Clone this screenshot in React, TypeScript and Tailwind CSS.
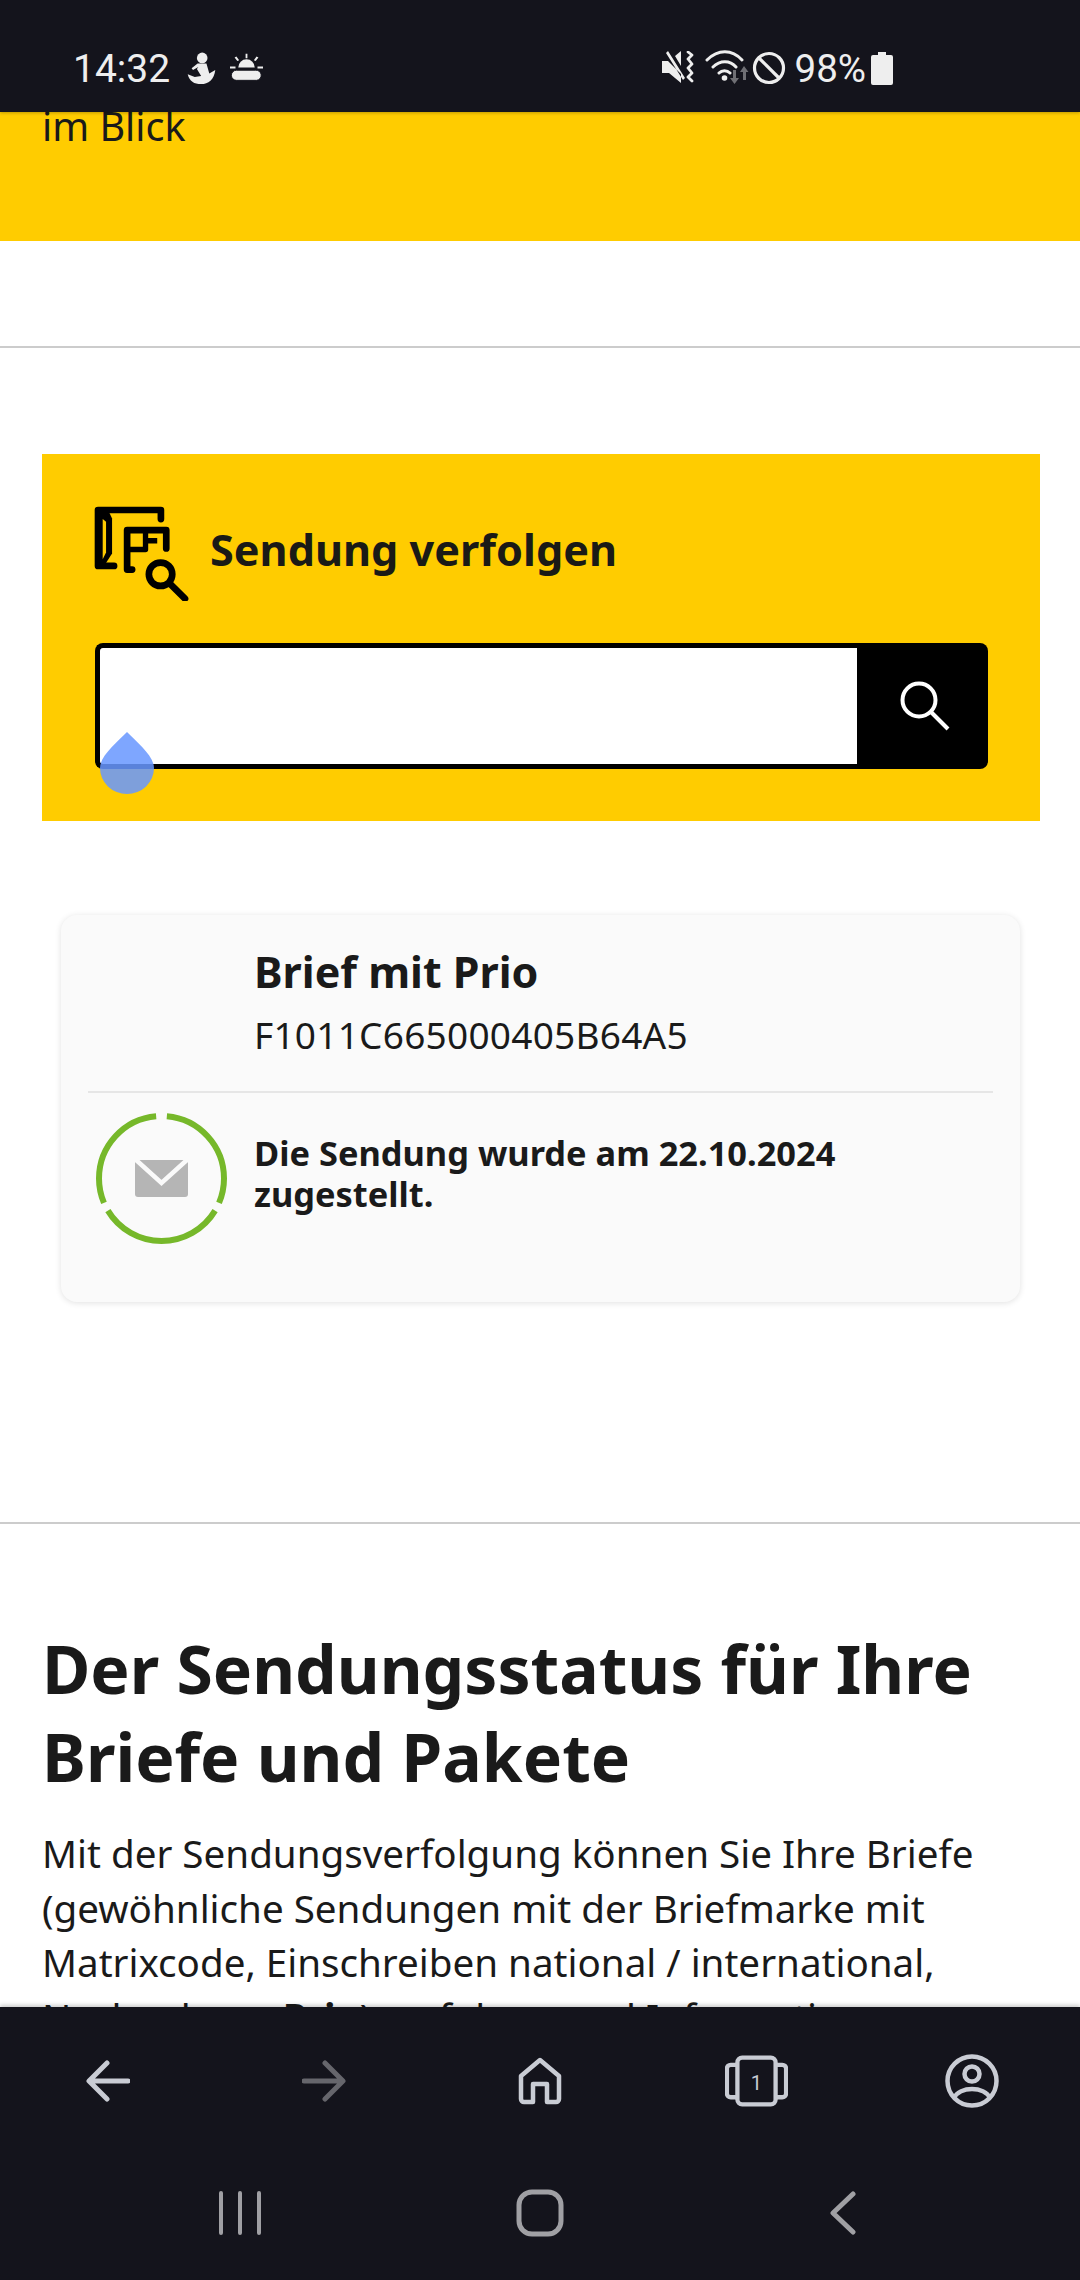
function StatusBar() {
  return (
    <div className="relative z-10 flex h-[112px] shrink-0 items-start bg-[#14141c] pl-[73px] pt-[46px] font-['Roboto',sans-serif] text-[39px] leading-[46px] text-[#eeeeee] shadow-[0_1px_3px_rgba(0,0,0,0.25)]">
      <span className="w-[114px]">14:32</span>
      <svg width="29" height="34" viewBox="385 65 82 95" className="mt-[5px]" fill="#eeeeee">
        <circle cx="428" cy="84" r="15" />
        <path d="M415 100h25l8 28 17-10c-3 27-20 40-40 40-20 0-33-8-38-28l20 8 18-3-12-20 4-5-15 8-4-5z" />
      </svg>
      <svg width="33" height="29" viewBox="0 0 36 30" className="ml-[14px] mt-[7px]" fill="#eeeeee">
        <path d="M17 0h2v5h-2zM5 4l2-1 3 4-2 1zM29 3l2 1-3 4-2-1zM0 14h6v2H0zM30 14h6v2h-6z" />
        <path d="M9 15a9 9 0 0 1 18 0z" />
        <path d="M7 18h21a5.500 5.500 0 0 1 1 11H7a5.500 5.500 0 0 1 0-11z" stroke="#14141c" strokeWidth="1" />
      </svg>
      <div className="ml-auto mr-[187px] flex items-start">
        <svg width="34" height="34" viewBox="0 0 34 34" className="mt-[5px]" fill="#eeeeee">
          <path d="M1 10h6l13 13v9L8 22H1zM5 2l17 27 2-2L7 0zM14 5l6-5v15z" />
          <path d="M27 1l4 3-4 4 4 5-4 4 4 5-4 4 4 4" fill="none" stroke="#eeeeee" strokeWidth="2.800" strokeLinecap="round" strokeLinejoin="round" />
        </svg>
        <svg width="44" height="36" viewBox="0 0 44 36" className="ml-[10px] mt-[3px]">
          <path d="M2 11c11-11 25-11 35 0M8 18c7-7 17-7 23 0M14 24c3-3 8-3 11 0" fill="none" stroke="#eeeeee" strokeWidth="3" strokeLinecap="round" />
          <circle cx="19.500" cy="29" r="2.800" fill="#eeeeee" />
          <path d="M28 21h3v8h3l-4.500 6-4.500-6h3zM39 17l4.500 6H41v8h-3v-8h-3z" fill="#6f6f74" />
        </svg>
        <svg width="34" height="34" viewBox="0 0 34 34" className="ml-[3px] mt-[5px]" fill="none" stroke="#eeeeee" strokeWidth="3.200">
          <circle cx="17" cy="17" r="14.500" />
          <path d="M7 7l20 20" />
        </svg>
        <span className="ml-[9px] text-[38.500px]">98%</span>
        <svg width="22" height="33" viewBox="0 0 22 33" className="ml-[5px] mt-[6px]" fill="#eeeeee">
          <path d="M7 0h8v3h5a2 2 0 0 1 2 2v26a2 2 0 0 1-2 2H2a2 2 0 0 1-2-2V5a2 2 0 0 1 2-2h5z" />
        </svg>
      </div>
    </div>
  );
}

function TrackingIcon() {
  return (
    <svg width="97" height="97" viewBox="40 40 290 290" fill="none" stroke="#000" strokeWidth="20" strokeLinecap="round" strokeLinejoin="round" className="-ml-[3px]">
      {/* book */}
      <path d="M246 85V58H58v167h48" />
      <path d="M58 58h30l12 25v105l-24 37H58z" fill="#000" stroke="none" />
      <path d="M72 85l10 8v92l-10 20z" fill="#ffcc00" stroke="none" />
      {/* label */}
      <path d="M160 236h-15V118h117v55" />
      <path d="M150 176h50v-50M200 150h35" strokeWidth="16" strokeLinecap="butt" />
      {/* lens */}
      <circle cx="245" cy="250" r="35" />
      <path d="M272 277l46 46" />
    </svg>
  );
}

function TrackingBox() {
  return (
    <div className="ml-[42px] mt-[106px] h-[367px] w-[998px] bg-[#ffcc00] pl-[53px] pr-[52px] pt-[50px]">
      <div className="flex items-center">
        <TrackingIcon />
        <h2 className="ml-[21px] pb-[6px] text-[43.200px] font-bold leading-[54px] text-[#1a1a16]">Sendung verfolgen</h2>
      </div>
      <div className="relative mt-[42px] flex h-[126px]">
        <div className="flex-1 rounded-l-[8px] border-[5px] border-r-0 border-black bg-white" />
        <div className="flex w-[131px] items-center justify-center rounded-r-[8px] bg-black pl-[4px]">
          <svg width="50" height="50" viewBox="0 0 50 50" fill="none" stroke="#fff" strokeWidth="4">
            <circle cx="19" cy="19" r="16.500" />
            <path d="M31 31l17 17" />
          </svg>
        </div>
        {/* text selection handle */}
        <svg width="54" height="62" viewBox="0 0 54 62" className="absolute left-[5px] top-[89px]">
          <path d="M27 0C37 10 54 24 54 36a27 26 0 0 1-54 0C0 24 17 10 27 0z" fill="rgba(105,151,255,0.86)" />
        </svg>
      </div>
    </div>
  );
}

function StatusRing() {
  return (
    <svg width="131" height="131" viewBox="0 0 131 131" fill="none">
      <circle cx="65.500" cy="65.500" r="62.500" stroke="#76b82a" strokeWidth="6" pathLength="360" strokeDasharray="108 8 118 8 108 10" strokeDashoffset="-5" transform="rotate(-90 65.500 65.500)" />
      <path d="M41 47h49a2 2 0 0 1 2 2v32a3 3 0 0 1-3 3H42a3 3 0 0 1-3-3V49a2 2 0 0 1 2-2z" fill="#b5b5b5" />
      <path d="M39 46l26.500 24L92 46" stroke="#fafafa" strokeWidth="4.500" />
    </svg>
  );
}

function ShipmentCard() {
  return (
    <div className="ml-[61px] mt-[94px] h-[387px] w-[959px] rounded-[16px] bg-[#fafafa] px-[27px] pt-[31px] shadow-[0_1px_6px_rgba(0,0,0,0.12)]">
      <div className="h-[147px] border-b-2 border-[#e6e6e6] pl-[166px]">
        <h3 className="text-[43px] font-bold leading-[52px] text-[#1a1a1a]">Brief mit Prio</h3>
        <p className="mt-[15px] text-[37px] leading-[44px] tracking-[0.25px] text-[#1a1a1a]">F1011C665000405B64A5</p>
      </div>
      <div className="mt-[20px] flex items-start">
        <div className="ml-[8px] shrink-0">
          <StatusRing />
        </div>
        <p className="ml-[27px] mt-[19px] w-[640px] text-[34.400px] font-bold leading-[41px] text-[#1a1a1a]">
          Die Sendung wurde am 22.10.2024 zugestellt.
        </p>
      </div>
    </div>
  );
}

function NavIcon({ children }: { children: React.ReactNode }) {
  return <div className="flex items-center justify-center">{children}</div>;
}

function BrowserBar() {
  return (
    <div className="relative z-10 h-[273px] shrink-0 bg-[#14141c] shadow-[0_-2px_4px_rgba(0,0,0,0.2)]">
      <div className="grid h-[146px] grid-cols-5 pt-[2px]">
        <NavIcon>
          <svg width="44" height="42" viewBox="0 0 44 42" fill="none" stroke="#c9ccd4" strokeWidth="5" strokeLinecap="round" strokeLinejoin="round">
            <path d="M21 3L3 21l18 18M4 21h38" />
          </svg>
        </NavIcon>
        <NavIcon>
          <svg width="44" height="42" viewBox="0 0 44 42" fill="none" stroke="#66666c" strokeWidth="5" strokeLinecap="round" strokeLinejoin="round">
            <path d="M23 3l18 18-18 18M2 21h38" />
          </svg>
        </NavIcon>
        <NavIcon>
          <svg width="44" height="48" viewBox="0 0 44 48" fill="none" stroke="#c9ccd4" strokeWidth="4.500" strokeLinejoin="round">
            <path d="M22 3L3 19v23a3 3 0 0 0 3 3h9V27h14v18h9a3 3 0 0 0 3-3V19z" />
          </svg>
        </NavIcon>
        <NavIcon>
          <svg width="63" height="54" viewBox="0 0 66 54" fill="none" stroke="#c9ccd4" strokeWidth="4.500" strokeLinejoin="round">
            <rect x="13" y="2.500" width="40" height="49" rx="5" />
            <path d="M13 10H6a4 4 0 0 0-4 4v26a4 4 0 0 0 4 4h7M53 10h7a4 4 0 0 1 4 4v26a4 4 0 0 1-4 4h-7" />
            <text x="33" y="36" textAnchor="middle" fill="#c9ccd4" stroke="none" fontSize="21" fontFamily="Roboto, sans-serif">1</text>
          </svg>
        </NavIcon>
        <NavIcon>
          <svg width="54" height="54" viewBox="0 0 54 54" fill="none" stroke="#c9ccd4" strokeWidth="4.500">
            <circle cx="27" cy="27" r="24.500" />
            <circle cx="27" cy="20" r="7.500" />
            <path d="M9 44c6-12 30-12 36 0" />
          </svg>
        </NavIcon>
      </div>
      <div className="flex h-[127px] items-start pl-[210px] pt-[38px]">
        <svg width="60" height="44" viewBox="0 0 60 44" fill="none" stroke="#a0a0a4" strokeWidth="4" strokeLinecap="round">
          <path d="M11 2v40M30 2v40M49 2v40" />
        </svg>
        <svg width="48" height="48" viewBox="0 0 48 48" fill="none" stroke="#a0a0a4" strokeWidth="5" className="ml-[246px] mt-[-2px]">
          <rect x="3" y="3" width="42" height="42" rx="13" />
        </svg>
        <svg width="28" height="44" viewBox="0 0 28 44" fill="none" stroke="#a0a0a4" strokeWidth="5" strokeLinecap="round" strokeLinejoin="round" className="ml-[265px]">
          <path d="M24 3L4 22l20 19" />
        </svg>
      </div>
    </div>
  );
}

export default function App() {
  return (
    <div className="flex h-[2280px] w-[1080px] flex-col overflow-hidden bg-white font-['Noto_Sans',sans-serif] text-[#1a1a1a]">
      <StatusBar />
      <div className="min-h-0 flex-1 overflow-hidden">
        <div className="flow-root h-[129px] bg-[#ffcc00] pl-[42px]">
          <p className="-mt-[13px] text-[39.500px] leading-[54px]">im Blick</p>
        </div>
        <div className="mt-[105px] h-[2px] bg-[#cccccc]" />
        <TrackingBox />
        <ShipmentCard />
        <div className="mt-[220px] h-[2px] bg-[#cccccc]" />
        <div className="px-[42px] pt-[100px]">
          <h1 className="text-[66px] font-bold leading-[88px] text-[#1a1a1a]">Der Sendungsstatus für Ihre Briefe und Pakete</h1>
          <p className="mt-[26px] text-[38.600px] leading-[54.500px]">
            Mit der Sendungsverfolgung können Sie Ihre Briefe (gewöhnliche Sendungen mit der Briefmarke mit Matrixcode, Einschreiben national / international, Nachnahme, <strong className="font-bold">Prio</strong>) verfolgen und Informationen
          </p>
        </div>
      </div>
      <BrowserBar />
    </div>
  );
}
